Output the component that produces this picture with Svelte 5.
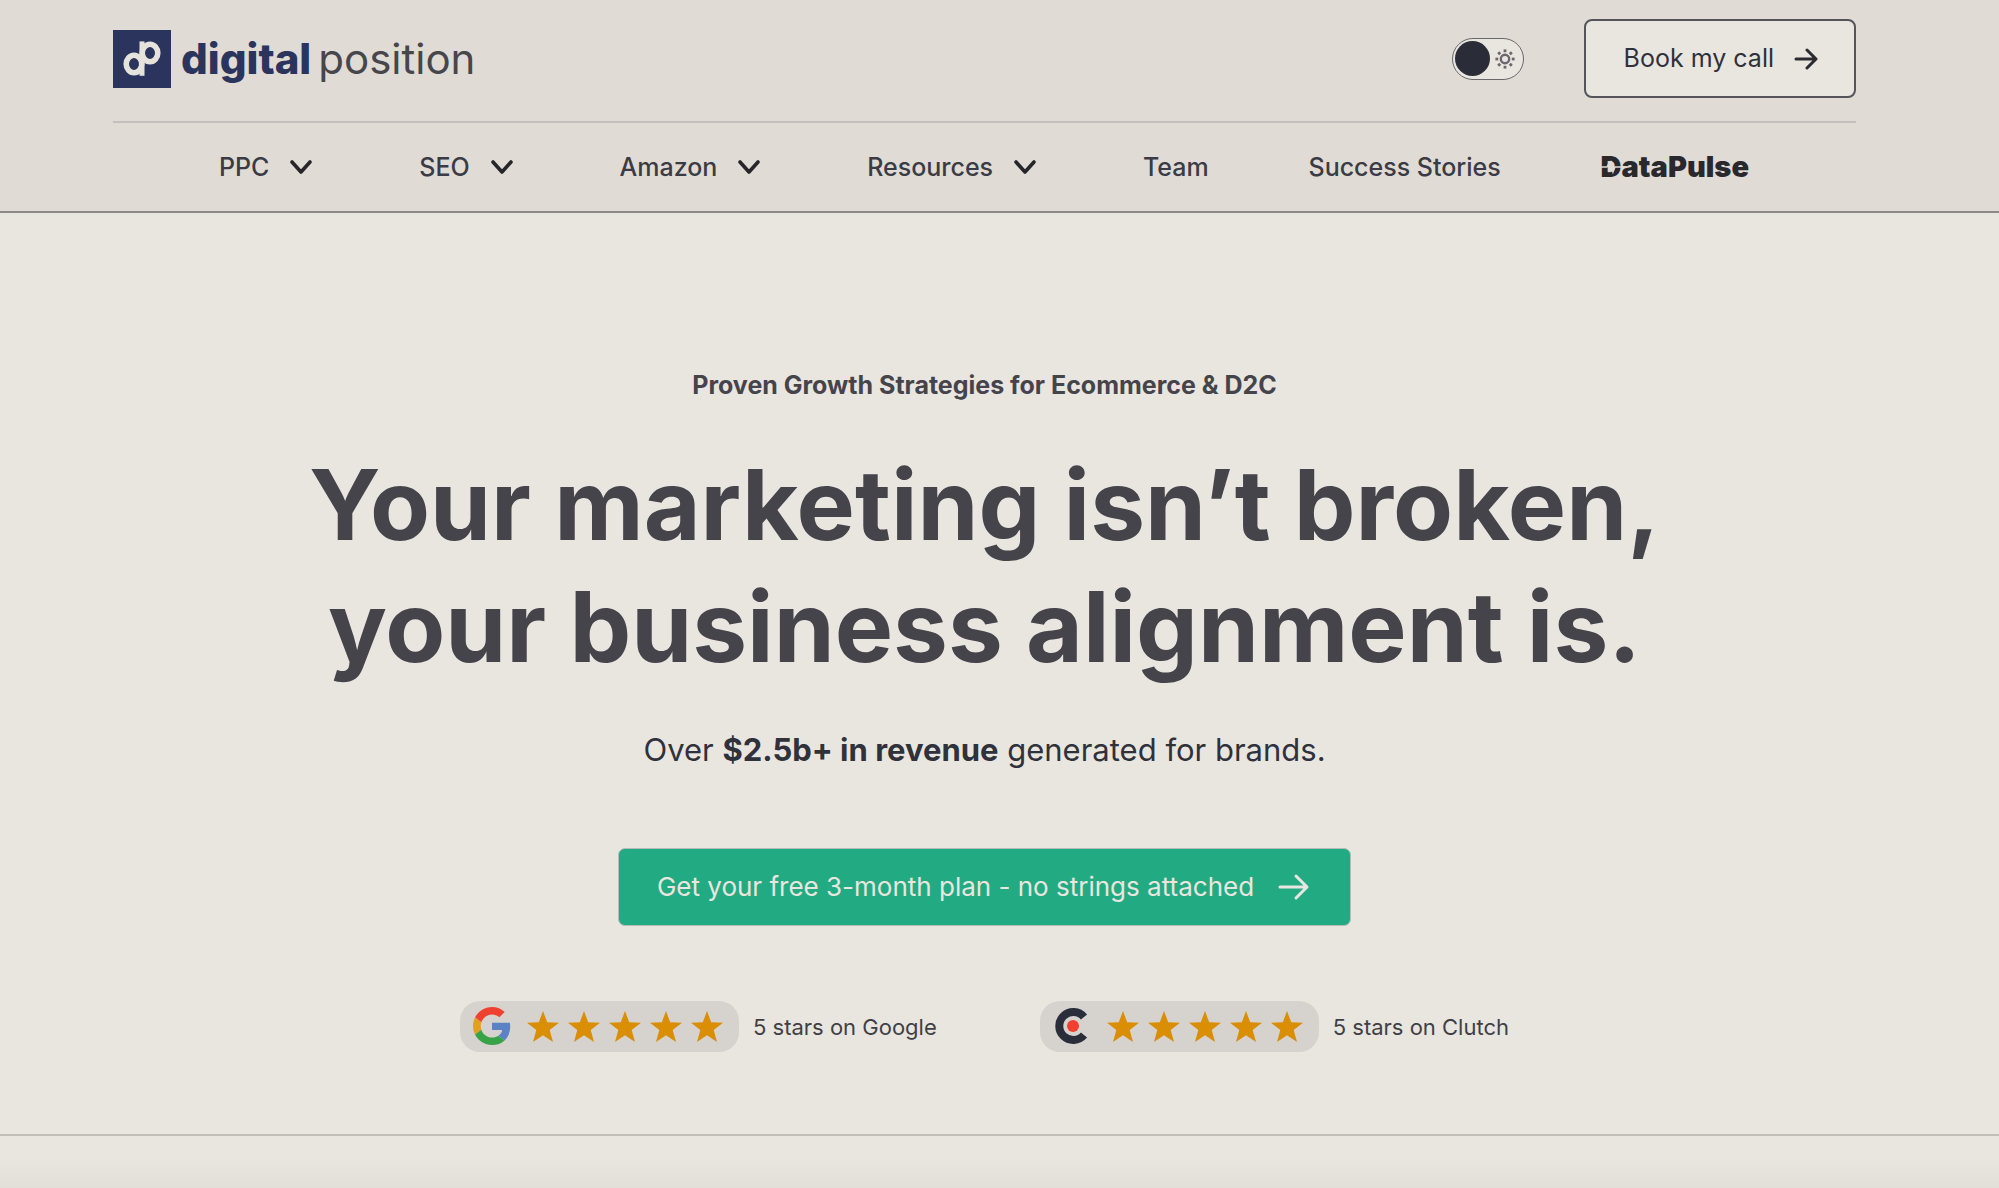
<script>
	// main menu, items with a submenu show the chevron
	const menu = [
		{ label: 'PPC', submenu: true },
		{ label: 'SEO', submenu: true },
		{ label: 'Amazon', submenu: true },
		{ label: 'Resources', submenu: true },
		{ label: 'Team', submenu: false },
		{ label: 'Success Stories', submenu: false }
	];
	const ratings = ['Google', 'Clutch'];
	const stars = [1, 2, 3, 4, 5];
	const rays = [0, 45, 90, 135, 180, 225, 270, 315];

	let light = $state(false);
</script>

<div class="page">
	<header>
		<div class="container">
			<div class="topbar">
				<a href="/" class="logo">
					<svg class="mark" viewBox="0 0 58 58" aria-hidden="true">
						<rect width="58" height="58" fill="#2b345c" />
						<g fill="none" stroke="#e6e2dc" stroke-width="5.6">
							<ellipse cx="21" cy="34" rx="7.8" ry="8.8" />
							<ellipse cx="37" cy="23" rx="7.8" ry="8.8" />
							<path d="M29 11.4V45.8" stroke-width="5" />
						</g>
					</svg>
					<span class="name"><b>digital</b><span>position</span></span>
				</a>

				<div class="actions">
					<label class="toggle">
						<input type="checkbox" bind:checked={light} aria-label="Toggle theme" />
						<span class="knob"></span>
						<svg class="sun" viewBox="0 0 20 20" aria-hidden="true">
							<circle cx="10" cy="10" r="4.2" fill="none" stroke="#6a686d" stroke-width="2.4" />
							{#each rays as angle}
								<path
									d="M10 .4v2.800"
									stroke="#6a686d"
									stroke-width="2.8"
									transform="rotate({angle} 10 10)"
								/>
							{/each}
						</svg>
					</label>
					<a href="/contact" class="call">
						Book my call
						<svg viewBox="0 0 24 24" aria-hidden="true">
							<path d="M2 12h20M13 3l9 9-9 9" />
						</svg>
					</a>
				</div>
			</div>

			<nav>
				{#each menu as item}
					{#if item.submenu}
						<button class="item">
							{item.label}
							<svg viewBox="0 0 24 14" aria-hidden="true"><path d="M3 2l9 10 9-10" /></svg>
						</button>
					{:else}
						<a href="/" class="item">{item.label}</a>
					{/if}
				{/each}
				<a href="/datapulse" class="datapulse">
					DataPulse
					<svg viewBox="0 0 22 14" aria-hidden="true">
						<path d="M0 7h6l1-2 1 2 2-6 2 11 2-5h8" />
					</svg>
				</a>
			</nav>
		</div>
	</header>

	<main>
		<p class="eyebrow">Proven Growth Strategies for Ecommerce &amp; D2C</p>
		<h1>Your marketing isn’t broken,<br />your business alignment is.</h1>
		<p class="lead">Over <strong>$2.5b+ in revenue</strong> generated for brands.</p>
		<a href="/plan" class="cta">
			Get your free 3-month plan - no strings attached
			<svg viewBox="0 0 32 28" aria-hidden="true">
				<path d="M2 14h27M18 3l11 11-11 11" />
			</svg>
		</a>

		<div class="ratings">
			{#each ratings as site}
				<div class="rating">
					<div class="pill">
						{#if site === 'Google'}
							<svg class="brand" viewBox="0 0 48 48" aria-hidden="true">
								<path fill="#f04030" d="M24 9.500c3.540 0 6.710 1.220 9.210 3.600l6.850-6.850C35.900 2.380 30.470 0 24 0 14.620 0 6.510 5.380 2.560 13.220l7.980 6.190C12.430 13.720 17.740 9.500 24 9.500z" />
								<path fill="#5b82c4" d="M46.980 24.550c0-1.570-.15-3.090-.38-4.550H24v9.020h12.940c-.58 2.960-2.260 5.480-4.780 7.180l7.730 6c4.510-4.180 7.090-10.360 7.090-17.650z" />
								<path fill="#e2a01f" d="M10.530 28.590c-.48-1.450-.76-2.990-.76-4.590s.27-3.140.76-4.590l-7.980-6.190C.92 16.460 0 20.120 0 24c0 3.880.92 7.540 2.560 10.780l7.970-6.190z" />
								<path fill="#37a349" d="M24 48c6.480 0 11.930-2.130 15.890-5.810l-7.730-6c-2.150 1.450-4.920 2.300-8.160 2.300-6.260 0-11.570-4.220-13.470-9.910l-7.980 6.190C6.510 42.620 14.620 48 24 48z" />
							</svg>
						{:else}
							<svg class="brand" viewBox="0 0 38 38" aria-hidden="true">
								<path d="M31 10A14 14 0 1 0 31 28" fill="none" stroke="#2a2d3a" stroke-width="8" />
								<circle cx="20" cy="19" r="6" fill="#f04030" />
							</svg>
						{/if}
						<div class="stars">
							{#each stars as star}
								<svg viewBox="0 0 32 31" aria-hidden="true">
									<path fill="#d98e04" d="M16 0l4.200 11.200L32 11.700l-9.300 7.400L26 31l-10-6.800L6 31l3.300-11.900L0 11.700l11.800-.5z" />
								</svg>
							{/each}
						</div>
					</div>
					<span>5 stars on {site}</span>
				</div>
			{/each}
		</div>
	</main>

	<section class="next"></section>
</div>

<style>
	:global(body) {
		margin: 0;
		background: #e9e6df;
	}

	.page {
		min-height: 100vh;
		display: flex;
		flex-direction: column;
		font-family: Inter, 'Liberation Sans', sans-serif;
		color: #2f313b;
	}

	a {
		color: inherit;
		text-decoration: none;
	}

	header {
		background: #e0dbd5;
		border-bottom: 2px solid #8b898a;
	}

	.container {
		padding: 0 143px 0 113px;
	}

	.topbar {
		display: flex;
		justify-content: space-between;
		align-items: center;
		padding: 19px 0 23px;
		border-bottom: 2px solid #c4bfbc;
	}

	.logo {
		display: flex;
		align-items: center;
		gap: 10px;
	}

	.mark {
		width: 58px;
		height: 58px;
	}

	.name {
		display: flex;
		gap: 7px;
		font-size: 42px;
		line-height: 56px;
		color: #47464c;
		font-weight: 400;
	}

	.name b {
		font-weight: 800;
		color: #2b345c;
	}

	.actions {
		display: flex;
		align-items: center;
		gap: 60px;
	}

	.toggle {
		box-sizing: border-box;
		display: flex;
		align-items: center;
		justify-content: space-between;
		width: 72px;
		height: 42px;
		padding: 0 8px 0 2px;
		border: 1px solid #6a686d;
		border-radius: 21px;
		background: #e9e6df;
		position: relative;
		cursor: pointer;
	}

	.toggle input {
		position: absolute;
		inset: 0;
		margin: 0;
		opacity: 0;
	}

	.knob {
		width: 35px;
		height: 35px;
		border-radius: 50%;
		background: #2a2d38;
	}

	.sun {
		width: 20px;
		height: 20px;
	}

	.call {
		display: flex;
		align-items: center;
		gap: 20px;
		padding: 20px 36px 20px 38px;
		border: 2px solid #55545a;
		border-radius: 8px;
		background: #e9e6df;
		font-size: 25px;
		line-height: 35px;
	}

	.call svg {
		width: 24px;
		height: 24px;
		fill: none;
		stroke: #2a2b30;
		stroke-width: 3;
		stroke-linecap: round;
		stroke-linejoin: round;
	}

	nav {
		display: flex;
		justify-content: space-between;
		align-items: center;
		padding: 26px 107px 26px 106px;
	}

	.item {
		display: flex;
		align-items: center;
		gap: 20px;
		padding: 0;
		border: none;
		background: none;
		font-family: inherit;
		font-size: 25px;
		font-weight: 500;
		line-height: 36px;
		color: #3a3b44;
	}

	button.item {
		padding-right: 6px;
		cursor: pointer;
	}

	.item svg {
		width: 24px;
		height: 14px;
		fill: none;
		stroke: #26262a;
		stroke-width: 3.6;
		stroke-linecap: round;
		stroke-linejoin: round;
	}

	.datapulse {
		position: relative;
		font-size: 29px;
		font-weight: 900;
		line-height: 36px;
		color: #29282c;
	}

	/* heartbeat line running across the D */
	.datapulse svg {
		position: absolute;
		left: 0;
		top: 11px;
		width: 22px;
		height: 14px;
		fill: none;
		stroke: #e0dbd5;
		stroke-width: 1.4;
	}

	main {
		display: flex;
		flex-direction: column;
		align-items: center;
		padding: 154px 30px 82px 0;
		text-align: center;
		border-bottom: 2px solid #c2bfbb;
	}

	.eyebrow {
		margin: 0 0 41px;
		font-size: 25px;
		font-weight: 700;
		line-height: 36px;
		color: #45444b;
	}

	h1 {
		margin: 0 0 40px;
		font-size: 98px;
		font-weight: 700;
		line-height: 122px;
		color: #45444b;
	}

	.lead {
		margin: 0 0 76px;
		font-size: 31px;
		line-height: 44px;
	}

	.cta {
		display: flex;
		align-items: center;
		gap: 24px;
		padding: 20px 40px 20px 38px;
		border: 1px solid #b5bdb5;
		border-radius: 7px;
		background: #22ab83;
		color: #e9e6df;
		font-size: 26px;
		line-height: 36px;
	}

	.cta svg {
		width: 32px;
		height: 28px;
		fill: none;
		stroke: #e9e6df;
		stroke-width: 3;
		stroke-linecap: round;
		stroke-linejoin: round;
	}

	.ratings {
		display: flex;
		gap: 103px;
		margin-top: 75px;
	}

	.rating {
		display: flex;
		align-items: center;
		gap: 14px;
		font-size: 22px;
		color: #3f3f47;
	}

	.pill {
		display: flex;
		align-items: center;
		gap: 16px;
		padding: 6px 16px 7px 13px;
		border-radius: 20px;
		background: #d6d2cd;
	}

	.brand {
		width: 38px;
		height: 38px;
	}

	.stars {
		display: flex;
		gap: 9px;
	}

	.stars svg {
		width: 32px;
		height: 31px;
	}

	.next {
		flex: 1;
		background: linear-gradient(#e9e6df 40%, #e2dfd9);
	}
</style>
